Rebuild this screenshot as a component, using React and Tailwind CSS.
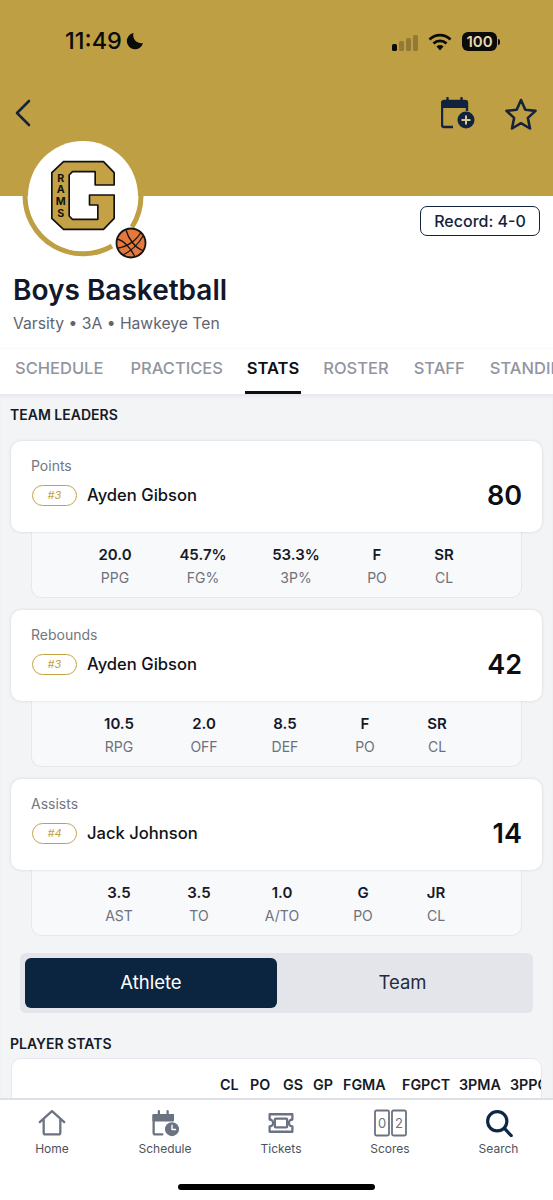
const font = { fontFamily: "Inter, 'Noto Sans', sans-serif" };

const leaders = [
  {
    label: "Points",
    num: "#3",
    name: "Ayden Gibson",
    total: "80",
    stats: [
      ["20.0", "PPG", "w-[60px] ml-[53px]"],
      ["45.7%", "FG%", "w-[60px] ml-[28px]"],
      ["53.3%", "3P%", "w-[60px] ml-[33px]"],
      ["F", "PO", "w-[30px] ml-[36px]"],
      ["SR", "CL", "w-[30px] ml-[37px]"],
    ],
  },
  {
    label: "Rebounds",
    num: "#3",
    name: "Ayden Gibson",
    total: "42",
    stats: [
      ["10.5", "RPG", "w-[60px] ml-[57px]"],
      ["2.0", "OFF", "w-[40px] ml-[35px]"],
      ["8.5", "DEF", "w-[40px] ml-[41px]"],
      ["F", "PO", "w-[30px] ml-[45px]"],
      ["SR", "CL", "w-[30px] ml-[42px]"],
    ],
  },
  {
    label: "Assists",
    num: "#4",
    name: "Jack Johnson",
    total: "14",
    stats: [
      ["3.5", "AST", "w-[40px] ml-[67px]"],
      ["3.5", "TO", "w-[40px] ml-[40px]"],
      ["1.0", "A/TO", "w-[40px] ml-[43px]"],
      ["G", "PO", "w-[30px] ml-[46px]"],
      ["JR", "CL", "w-[30px] ml-[43px]"],
    ],
  },
];

const tabs = [
  ["SCHEDULE", "mr-[27px]"],
  ["PRACTICES", "mr-[24px]"],
  ["STATS", "mr-[22px]"],
  ["ROSTER", "mr-[25px]"],
  ["STAFF", "mr-[25px]"],
  ["STANDINGS", ""],
];

function LeaderCard({ item }) {
  return (
    <div className="flex flex-col">
      <div className="relative z-10 mx-[11px] h-[91px] rounded-[10px] bg-white px-[20px] pt-[16px] shadow-[0_0_3px_rgba(30,41,59,0.16)]">
        <div className="text-[14px] leading-[18px] text-[#727782]">{item.label}</div>
        <div className="mt-[10px] flex h-[20px] items-center">
          <span className="ml-[1px] flex h-[21px] w-[45px] items-center justify-center rounded-full border-[1.5px] border-[#c4a145] text-[11px] italic text-[#c4a145]">
            {item.num}
          </span>
          <span className="ml-[10px] text-[16.6px] font-medium text-[#11131a]">{item.name}</span>
          <span className="ml-auto text-[27px] font-semibold leading-none text-[#0c0e14]">{item.total}</span>
        </div>
      </div>
      <div className="mx-[31px] flex h-[66px] rounded-b-[10px] border border-t-0 border-[#e6e8ed] bg-[#f8f9fb] pt-[13px]">
        {item.stats.map(([value, key, box]) => (
          <div key={key} className={`flex shrink-0 flex-col items-center ${box}`}>
            <span className="text-[15px] font-semibold leading-[20px] text-[#161a26]">{value}</span>
            <span className="mt-[4px] text-[14px] leading-[18px] text-[#6d717b]">{key}</span>
          </div>
        ))}
      </div>
    </div>
  );
}

function TabIcon({ children }) {
  return (
    <svg width="28" height="28" viewBox="0 0 32 32" fill="none" stroke="#6b7280" strokeWidth="2.6" strokeLinejoin="round" strokeLinecap="round">
      {children}
    </svg>
  );
}

const navItems = [
  {
    label: "Home",
    box: "w-[104px]",
    icon: (
      <TabIcon>
        <path d="M2 15 16 2.500 30 15M6.500 12v15a2 2 0 0 0 2 2h15a2 2 0 0 0 2-2V12" />
      </TabIcon>
    ),
  },
  {
    label: "Schedule",
    box: "w-[122px]",
    icon: (
      <TabIcon>
        <path d="M13 29H5a2 2 0 0 1-2-2V7h22v5" />
        <path d="M3 7h22v6H3z" fill="#6b7280" />
        <path d="M9 2.500V7M19 2.500V7" />
        <circle cx="24" cy="23" r="8" fill="#6b7280" stroke="none" />
        <path d="M24 18.500V23.500h4" stroke="#fff" strokeWidth="1.600" />
      </TabIcon>
    ),
  },
  {
    label: "Tickets",
    box: "w-[110px]",
    icon: (
      <TabIcon>
        <path d="M3 6h26v6a4 4 0 0 0 0 8v6H3v-6a4 4 0 0 0 0-8z" />
        <rect x="9" y="11" width="14" height="10" rx="1" />
      </TabIcon>
    ),
  },
  {
    label: "Scores",
    box: "w-[108px]",
    icon: (
      <svg width="33" height="28" viewBox="0 0 33 28" fill="none" stroke="#6b7280" strokeWidth="1.800">
        <rect x="1" y="1.500" width="14" height="25" rx="1.500" />
        <rect x="18" y="1.500" width="14" height="25" rx="1.500" />
        <text x="8" y="19" fontSize="13" fill="#6b7280" stroke="none" textAnchor="middle" style={font}>0</text>
        <text x="25" y="19" fontSize="13" fill="#6b7280" stroke="none" textAnchor="middle" style={font}>2</text>
      </svg>
    ),
  },
  {
    label: "Search",
    box: "w-[109px]",
    icon: (
      <svg width="28" height="28" viewBox="0 0 32 32" fill="none" stroke="#0d2744" strokeWidth="3.600" strokeLinecap="round">
        <circle cx="14" cy="14" r="11" />
        <path d="m22.500 22.500 7.500 8" />
      </svg>
    ),
  },
];

export default function App() {
  return (
    <div className="relative flex h-[1200px] w-[553px] flex-col overflow-hidden bg-[#f3f4f6]" style={font}>
      {/* Header */}
      <div className="h-[196px] shrink-0 bg-[#bf9f44]">
        <div className="flex h-[82px] items-start pl-[65px] pr-[53px] pt-[26px]">
          <span className="text-[23.500px] font-medium leading-[30px] text-[#0b0b0a]">11:49</span>
          <svg className="ml-[4px] mt-[6px]" width="18" height="18" viewBox="0 0 18 18" fill="#0b0b0a">
            <path d="M7.500 1A8.200 8.200 0 1 0 17 11 8 8 0 0 1 7.500 1z" />
          </svg>
          <div className="ml-auto mt-[6px] flex items-center">
            <svg width="27" height="18" viewBox="0 0 27 18">
              <rect x="0" y="11" width="5" height="7" rx="1.500" fill="#0b0b0a" />
              <rect x="7" y="8" width="5" height="10" rx="1.500" fill="#0b0b0a" opacity=".25" />
              <rect x="14" y="5" width="5" height="13" rx="1.500" fill="#0b0b0a" opacity=".25" />
              <rect x="21" y="2" width="5" height="16" rx="1.500" fill="#0b0b0a" opacity=".25" />
            </svg>
            <svg className="ml-[9px]" width="24" height="18" viewBox="0 0 24 18" fill="none" stroke="#0b0b0a" strokeWidth="2.800">
              <path d="M1.500 6.500a15 15 0 0 1 21 0M5.500 10.500a9.500 9.500 0 0 1 13 0" />
              <path d="m8.500 13.500 3.500 4 3.500-4a5 5 0 0 0-7 0z" fill="#0b0b0a" stroke="none" />
            </svg>
            <span className="ml-[10px] flex h-[19px] w-[35px] items-center justify-center rounded-[6px] bg-[#0b0b0a] text-[15px] font-semibold leading-none text-[#e3d9ae]">
              100
            </span>
            <span className="ml-[1px] h-[6px] w-[2px] rounded-r-full bg-[#0b0b0a]" />
          </div>
        </div>
        <div className="flex items-start pl-[14px] pr-[15px] pt-[15px]">
          <svg className="mt-[1px]" width="18" height="30" viewBox="0 0 18 30" fill="none" stroke="#16233a" strokeWidth="2.600" strokeLinecap="round" strokeLinejoin="round">
            <path d="M15 3 3 15l12 12" />
          </svg>
          <svg className="ml-auto" width="34" height="32" viewBox="0 0 34 32" fill="none">
            <path d="M12 30H3a2 2 0 0 1-2-2V6a2 2 0 0 1 2-2h21a2 2 0 0 1 2 2v8" stroke="#12233d" strokeWidth="2.400" />
            <path d="M1 4h25v7H1z" fill="#12233d" />
            <path d="M6.500 1v5M20.500 1v5" stroke="#12233d" strokeWidth="2.400" strokeLinecap="round" />
            <circle cx="25" cy="23" r="8.500" fill="#12233d" />
            <path d="M25 18.500v9M20.500 23h9" stroke="#d9c88f" strokeWidth="2" />
          </svg>
          <svg className="ml-[29px]" width="34" height="34" viewBox="0 0 34 34" fill="none" stroke="#16233a" strokeWidth="2.600" strokeLinejoin="round">
            <path d="m17 3 4.300 9.800 10.200 1.100-7.600 7 2.100 10.600-9-5.300-9 5.300 2.100-10.600-7.600-7 10.200-1.100z" />
          </svg>
        </div>
      </div>

      {/* Team */}
      <div className="relative h-[198px] shrink-0 bg-white">
        <div className="absolute left-[22px] top-[-61px] h-[122px] w-[122px]">
          <svg className="absolute inset-0" width="122" height="122" viewBox="0 0 122 122" fill="none">
            <path d="M3 61A58 58 0 0 0 90 111M110 92A58 58 0 0 0 119 61" stroke="#bf9f44" strokeWidth="5" />
          </svg>
          <div className="absolute left-[6px] top-[6px] h-[110px] w-[110px] rounded-full bg-white" />
          <svg className="absolute left-[28px] top-[25px]" width="66" height="71" viewBox="150 90 197 213">
            <path
              d="M190 95H310L342 128V165H285V125H217L207 135V258L217 268H293V225H268V195H342V265L310 298H190L155 265V128Z"
              fill="#c4a145"
              stroke="#111"
              strokeWidth="5"
              strokeLinejoin="round"
            />
            <text x="182" y="155" fontSize="32" fontWeight="700" textAnchor="middle" fill="#111" style={font}>R</text>
            <text x="182" y="190" fontSize="32" fontWeight="700" textAnchor="middle" fill="#111" style={font}>A</text>
            <text x="182" y="224" fontSize="32" fontWeight="700" textAnchor="middle" fill="#111" style={font}>M</text>
            <text x="182" y="260" fontSize="32" fontWeight="700" textAnchor="middle" fill="#111" style={font}>S</text>
          </svg>
          <svg className="absolute left-[93px] top-[92px]" width="32" height="32" viewBox="0 0 32 32" fill="none" stroke="#1a1410" strokeWidth="1.300">
            <circle cx="16" cy="16" r="14.500" fill="#e3793f" strokeWidth="1.800" />
            <path d="M3 21C12 20 22 13 26 5M8 28c8-4 16-12 20-19M11 3c2 7 8 18 18 21M2 12c6 1 14 9 18 18" />
          </svg>
        </div>
        <div className="flex justify-end pr-[13px] pt-[10px]">
          <span className="flex h-[30px] w-[120px] items-center justify-center rounded-[7px] border-[1.500px] border-[#12233d] text-[16px] font-medium text-[#12233d]">
            Record: 4-0
          </span>
        </div>
        <h1 className="ml-[13px] mt-[36px] text-[28px] font-semibold leading-[36px] text-[#11182a]">Boys Basketball</h1>
        <p className="ml-[13px] mt-[5px] text-[15.700px] leading-[22px] text-[#5f6470]">Varsity • 3A • Hawkeye Ten</p>
        <div className="absolute bottom-0 left-0 flex h-[46px] w-full overflow-hidden border-t border-[#fafafb] pl-[15px]">
          {tabs.map(([tab, gap]) => (
            <div
              key={tab}
              className={
                tab === "STATS"
                  ? `-ml-[2px] flex h-full shrink-0 items-center border-b-[3px] border-[#0c0e14] px-[2px] pb-[3px] text-[16.500px] font-semibold text-[#0c0e14] ${gap}`
                  : `flex h-full shrink-0 items-center border-b-[3px] border-transparent pb-[3px] text-[16.500px] font-medium text-[#92959e] ${gap}`
              }
            >
              {tab}
            </div>
          ))}
        </div>
      </div>

      {/* Leaders */}
      <div className="shrink-0 overflow-hidden border-t border-[#e6e8ed] shadow-[inset_0_2px_3px_rgba(0,0,0,0.04)]">
        <h2 className="ml-[10px] mt-[11px] text-[14px] font-semibold leading-[18px] text-[#161a26]">TEAM LEADERS</h2>
        <div className="mt-[17px] flex flex-col gap-[12px]">
          {leaders.map((item) => (
            <LeaderCard key={item.label} item={item} />
          ))}
        </div>
        <div className="mx-[20px] mt-[17px] flex h-[60px] rounded-[6px] bg-[#e4e5ea] p-[5px]">
          <div className="flex w-[252px] items-center justify-center rounded-[6px] bg-[#0b2540] text-[18.500px] text-white">Athlete</div>
          <div className="flex flex-1 items-center justify-center text-[18.500px] text-[#222b3d]">Team</div>
        </div>
        <h2 className="ml-[10px] mt-[22px] text-[14px] font-semibold leading-[18px] text-[#161a26]">PLAYER STATS</h2>
        <div className="mx-[11px] mt-[5px] h-[50px] overflow-hidden rounded-t-[10px] border border-[#e6e8ed] bg-white">
          <div className="ml-[208px] mt-[15px] flex whitespace-nowrap text-[14.300px] font-semibold text-[#161a26]">
            <span className="w-[30px] shrink-0">CL</span>
            <span className="w-[33px] shrink-0">PO</span>
            <span className="w-[30px] shrink-0">GS</span>
            <span className="w-[30px] shrink-0">GP</span>
            <span className="w-[59px] shrink-0">FGMA</span>
            <span className="w-[57px] shrink-0">FGPCT</span>
            <span className="w-[51px] shrink-0">3PMA</span>
            <span className="shrink-0">3PPCT</span>
          </div>
        </div>
      </div>

      {/* Bottom tabs */}
      <div className="absolute bottom-0 left-0 flex h-[102px] w-full flex-col border-t-2 border-[#dde0e6] bg-white">
        <div className="flex pt-[9px]">
          {navItems.map((item) => (
            <div key={item.label} className={`flex flex-col items-center ${item.box}`}>
              {item.icon}
              <span className="mt-[3px] text-[12px] leading-[18px] text-[#4c5260]">{item.label}</span>
            </div>
          ))}
        </div>
        <div className="mx-auto mb-[10px] mt-auto h-[6px] w-[197px] rounded-full bg-black" />
      </div>
    </div>
  );
}
